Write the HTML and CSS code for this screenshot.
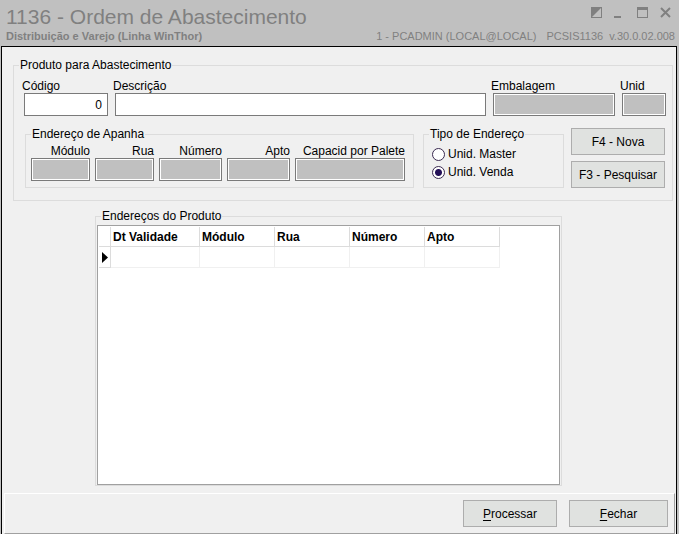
FILE: index.html
```html
<!DOCTYPE html>
<html lang="pt-BR">
<head>
  <meta charset="UTF-8">
  <title>1136 - Ordem de Abastecimento</title>
  <meta name="viewport" content="width=device-width, initial-scale=1.0">
  <link rel="stylesheet" href="styles.css">
</head>
<body>
  <header class="titlebar">
    <div class="titlebar-row">
      <h1 class="title">1136 - Ordem de Abastecimento</h1>
      <div class="window-controls">
        <button type="button" aria-label="Contraste">
          <svg width="11" height="11" viewBox="0 0 11 11"><path d="M0 0h11v11H0z" fill="#808080"/><path d="M10 1v9H1z" fill="#c0c0c0"/></svg>
        </button>
        <button type="button" aria-label="Minimizar">
          <svg width="11" height="11" viewBox="0 0 11 11"><path d="M0 9h7v2H0z" fill="#808080"/></svg>
        </button>
        <button type="button" aria-label="Maximizar">
          <svg width="11" height="11" viewBox="0 0 11 11"><path d="M0 0h11v11H0zM1 3v7h9V3z" fill="#808080" fill-rule="evenodd"/></svg>
        </button>
        <button type="button" aria-label="Fechar janela">
          <svg width="11" height="11" viewBox="0 0 11 11"><path d="M1 1l9 9M10 1l-9 9" stroke="#808080" stroke-width="2"/></svg>
        </button>
      </div>
    </div>
    <div class="titlebar-row">
      <strong class="module">Distribuição e Varejo (Linha WinThor)</strong>
      <div class="session">
        <span>1 - PCADMIN (LOCAL@LOCAL)</span>
        <span class="version"><span>PCSIS1136</span> <span>v.30.0.02.008</span></span>
      </div>
    </div>
  </header>

  <main class="window">
    <fieldset class="group product">
      <legend>Produto para Abastecimento</legend>
      <div class="fields product-fields">
        <div class="field codigo">
          <label for="codigo">Código</label>
          <input type="text" id="codigo" value="0">
        </div>
        <div class="field descricao">
          <label for="descricao">Descrição</label>
          <input type="text" id="descricao">
        </div>
        <div class="field embalagem">
          <label for="embalagem">Embalagem</label>
          <input type="text" id="embalagem" readonly>
        </div>
        <div class="field unid">
          <label for="unid">Unid</label>
          <input type="text" id="unid" readonly>
        </div>
      </div>

      <div class="product-row">
        <fieldset class="group apanha">
          <legend>Endereço de Apanha</legend>
          <div class="fields address-fields">
            <div class="field small">
              <label for="modulo">Módulo</label>
              <input type="text" id="modulo" readonly>
            </div>
            <div class="field small">
              <label for="rua">Rua</label>
              <input type="text" id="rua" readonly>
            </div>
            <div class="field medium">
              <label for="numero">Número</label>
              <input type="text" id="numero" readonly>
            </div>
            <div class="field medium">
              <label for="apto">Apto</label>
              <input type="text" id="apto" readonly>
            </div>
            <div class="field large">
              <label for="capacidade">Capacid por Palete</label>
              <input type="text" id="capacidade" readonly>
            </div>
          </div>
        </fieldset>

        <fieldset class="group tipo">
          <legend>Tipo de Endereço</legend>
          <label class="radio"><input type="radio" name="tipo" value="master">Unid. Master</label>
          <label class="radio"><input type="radio" name="tipo" value="venda" checked>Unid. Venda</label>
        </fieldset>

        <div class="actions">
          <button type="button" class="btn">F4 - Nova</button>
          <button type="button" class="btn">F3 - Pesquisar</button>
        </div>
      </div>
    </fieldset>

    <fieldset class="group addresses">
      <legend>Endereços do Produto</legend>
      <div class="grid">
        <table>
          <thead>
            <tr>
              <th class="marker"></th>
              <th class="validade">Dt Validade</th>
              <th>Módulo</th>
              <th>Rua</th>
              <th>Número</th>
              <th>Apto</th>
            </tr>
          </thead>
          <tbody>
            <tr>
              <td class="marker"><svg width="6" height="11" viewBox="0 0 12 22"><path d="M0 0l12 11L0 22z"/></svg></td>
              <td></td>
              <td></td>
              <td></td>
              <td></td>
              <td></td>
            </tr>
          </tbody>
        </table>
      </div>
    </fieldset>

    <footer class="footer">
      <button type="button" class="btn"><span><u>P</u>rocessar</span></button>
      <button type="button" class="btn close"><span><u>F</u>echar</span></button>
    </footer>
  </main>
</body>
</html>
```

FILE: styles.css
```css
* {
  box-sizing: border-box;
}

body {
  display: flex;
  flex-direction: column;
  min-height: 100vh;
  margin: 0;
  padding: 0 2px 0 1px;
  background-color: #c0c0c0;
  color: #000;
  font-family: "Liberation Sans", Arial, sans-serif;
  font-size: 12px;
  line-height: 14px;
}

input,
button {
  font: inherit;
  color: inherit;
}

/* Title bar */
.titlebar {
  height: 46px;
  padding: 5px 2px 0 5px;
  color: #808080;
}

.titlebar-row {
  display: flex;
  justify-content: space-between;
}

.title {
  margin: 0;
  font-size: 21px;
  line-height: 24px;
  font-weight: normal;
}

.window-controls {
  display: flex;
  gap: 12px;
  padding: 2px 4px 0 0;
}

.window-controls button {
  display: flex;
  width: 11px;
  height: 11px;
  padding: 0;
  border: none;
  background: none;
}

.module,
.session {
  font-size: 11px;
}

.session {
  display: flex;
  gap: 10px;
}

.version {
  display: flex;
  gap: 6px;
}

/* Window body */
.window {
  flex: 1;
  display: flex;
  flex-direction: column;
  border: 1px solid #000;
  border-bottom: none;
  background-color: #f0f0f0;
}

.group {
  min-width: 0;
  margin: 0;
  padding: 0;
  border: 1px solid #dcdcdc;
}

.group legend {
  margin-left: 5px;
  padding: 0 1px;
}

.product {
  margin: 11px 3px 0 11px;
  padding: 7px 0 12px;
}

.fields {
  display: flex;
}

.product-fields {
  gap: 7px;
  padding: 0 6px 0 10px;
}

.product-fields label {
  margin-left: -2px;
}

.field {
  display: flex;
  flex-direction: column;
}

.field input {
  width: 100%;
  height: 23px;
  padding: 0 5px;
  border: 1px solid #7a7a7a;
  border-radius: 0;
  background-color: #fff;
}

.field input:read-only {
  background-color: #c0c0c0;
  box-shadow: inset 0 0 0 1px #fff;
}

.codigo {
  width: 84px;
}

.codigo input {
  text-align: right;
}

.descricao {
  flex: 1;
}

.embalagem {
  width: 122px;
}

.unid {
  width: 44px;
}

.product-row {
  display: flex;
  align-items: flex-end;
  margin-top: 11px;
  padding: 0 7px 0 11px;
}

.apanha {
  flex: 1;
  margin-right: 9px;
  padding: 3px 0 6px;
}

.address-fields {
  gap: 5px;
  padding: 0 8px 0 5px;
  text-align: right;
}

.small {
  flex: 59;
}

.medium {
  flex: 63;
}

.large {
  flex: 110;
}

.tipo {
  width: 141px;
  height: 61px;
  margin-right: 7px;
  padding-top: 4px;
}

.radio {
  display: flex;
  align-items: center;
  gap: 3px;
  height: 18px;
  padding-left: 8px;
}

.radio input {
  appearance: none;
  width: 13px;
  height: 13px;
  margin: 0;
  border: 1px solid #3a2a50;
  border-radius: 50%;
  background-color: #fff;
}

.radio input:checked {
  background: radial-gradient(circle, #241058 3px, #fff 4px);
}

.actions {
  display: flex;
  flex-direction: column;
  gap: 6px;
}

.btn {
  width: 94px;
  height: 27px;
  padding: 0;
  border: 1px solid #adadad;
  border-radius: 0;
  background-color: #e0e2e0;
}

/* Address grid */
.addresses {
  margin: 8px 114px 7px 93px;
  padding-top: 2px;
}

/* takes the height left between the product group and the bottom panel */
.grid {
  min-height: calc(100vh - 274px);
  margin: 0 1px;
  padding: 1px;
  border: 1px solid #a0a0a0;
  background-color: #fff;
}

table {
  border-collapse: separate;
  border-spacing: 0;
  table-layout: fixed;
  width: 401px;
}

th {
  height: 20px;
  padding: 0 2px;
  border-right: 1px solid #dcdcdc;
  border-bottom: 1px solid #dcdcdc;
  text-align: left;
}

td {
  height: 21px;
  padding: 0;
  border-right: 1px solid #f0f0f0;
  border-bottom: 1px solid #f0f0f0;
}

.marker {
  width: 12px;
}

td.marker {
  padding-left: 3px;
  border-color: #dcdcdc;
}

.marker svg {
  display: block;
}

.validade {
  width: 89px;
}

/* Bottom panel */
.footer {
  display: flex;
  justify-content: flex-end;
  align-items: flex-end;
  gap: 12px;
  margin: auto 1px 0 2px;
  padding: 6px;
  border: 1px solid #fff;
  border-right-color: #a0a0a0;
  border-bottom-color: #a0a0a0;
}

.close {
  width: 99px;
}

.footer u {
  text-underline-offset: 2px;
}
```
